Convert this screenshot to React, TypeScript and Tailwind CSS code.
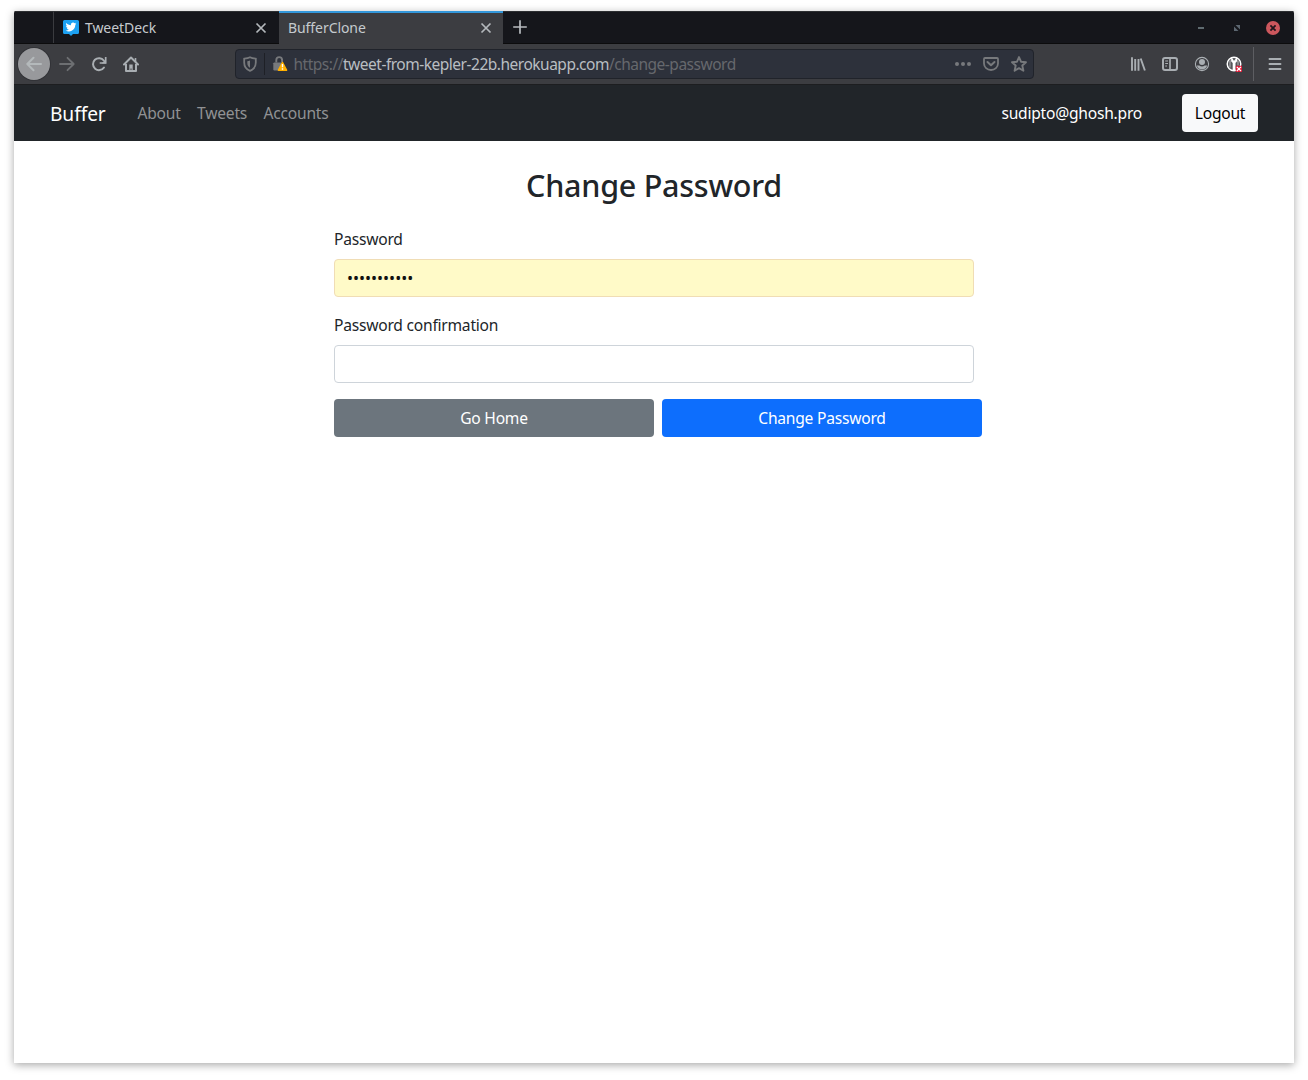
import React from "react";

function Icon({ children, className = "" }: { children: React.ReactNode; className?: string }) {
  return (
    <svg viewBox="0 0 16 16" fill="none" stroke="currentColor" strokeWidth="2" className={`size-4 shrink-0 ${className}`}>
      {children}
    </svg>
  );
}

function CloseX({ className }: { className: string }) {
  return (
    <Icon className={className}>
      <path d="M3.5 3.5l9 9M12.5 3.5l-9 9" strokeWidth="1.7" />
    </Icon>
  );
}

function TabBar() {
  return (
    <div className="flex h-[33px] border-b border-[#0c0c0d] bg-[#15161b] font-['Noto_Sans',sans-serif] text-[14px] tracking-[-0.07px] text-[#c5cace]">
      <div className="w-[39px] border-t border-[#2c2e31]" />
      <div className="flex w-[226px] items-center border-t border-l border-t-[#2c2e31] border-l-[#3a3b3f] pl-[9px] pr-[10px]">
        <svg viewBox="0 0 16 16" className="mr-[6px] size-4 shrink-0">
          <path d="M1.500 0h13A1.500 1.500 0 0 1 16 1.500v11a1.500 1.500 0 0 1-1.500 1.500H10L8 16l-2-2H1.500A1.500 1.500 0 0 1 0 12.500v-11A1.500 1.500 0 0 1 1.500 0z" fill="#1da1f2" />
          <path transform="translate(2.600 1.600) scale(.45)" fill="#fff" d="M23.950 4.570a10 10 0 0 1-2.820.770 4.960 4.960 0 0 0 2.160-2.720c-.95.550-2 .950-3.130 1.180a4.920 4.920 0 0 0-8.380 4.480C7.690 8.090 4.070 6.130 1.640 3.160a4.820 4.820 0 0 0-.670 2.480c0 1.710.87 3.210 2.190 4.100a4.900 4.900 0 0 1-2.230-.620v.060a4.920 4.920 0 0 0 3.950 4.830 5 5 0 0 1-2.210.080 4.940 4.940 0 0 0 4.600 3.420A9.870 9.870 0 0 1 0 19.540a13.990 13.990 0 0 0 7.560 2.210c9.050 0 14-7.500 14-13.980 0-.210 0-.420-.020-.630a9.940 9.940 0 0 0 2.460-2.550z" />
        </svg>
        <span className="grow">TweetDeck</span>
        <CloseX className="text-[#b4b8bc]" />
      </div>
      <div className="-mb-px flex w-[224px] items-center border-t-2 border-[#3498db] bg-[#3c3d41] pr-[9px] pb-px pl-[9px]">
        <span className="grow">BufferClone</span>
        <CloseX className="text-[#b4b8bc]" />
      </div>
      <div className="flex grow items-center border-t border-[#2c2e31] pl-[9px]">
        <svg viewBox="0 0 16 16" className="-mt-[2px] size-4 text-[#b8bcc0]" fill="none" stroke="currentColor">
          <path d="M8 1.200v13.600M1.200 8h13.600" strokeWidth="1.700" />
        </svg>
        <div className="grow" />
        <svg viewBox="0 0 90 16" className="mr-[10px] h-4 w-[90px]">
          <path d="M4 8h6" stroke="#5f6b70" strokeWidth="2" />
          <path d="M41.500 5H46v4.500zM40 6.500V11h4.500z" fill="#5c6670" />
          <circle cx="79" cy="8" r="7" fill="#cc575d" />
          <path d="M76.400 5.400l5.200 5.200M81.600 5.400l-5.200 5.200" stroke="#20161c" strokeWidth="1.800" />
        </svg>
      </div>
    </div>
  );
}

function UrlBar() {
  return (
    <div className="ml-[96px] flex h-[30px] w-[799px] shrink-0 items-center rounded-[4px] border border-[#20232a] bg-[#2d313b] pr-[6px] pl-[6px] text-[#77797c]">
      <Icon>
        <path d="M8 1.300C6 2.300 4 2.500 2.200 2.700v3.800C2.200 10.800 4.500 13.500 8 14.800c3.500-1.300 5.800-4 5.800-8.300V2.700C12 2.500 10 2.300 8 1.300z" strokeWidth="1.800" />
        <path d="M8 4.500c-1 .4-1.800.5-2.700.7v1.500c0 2.400.9 4.100 2.700 5.100z" fill="currentColor" stroke="none" />
      </Icon>
      <div className="mx-[6px] h-[22px] w-px bg-[#1e2026]" />
      <svg viewBox="0 0 18 18" className="mr-[3px] ml-px size-[18px] shrink-0">
        <path d="M4.300 7.500V5a2.900 2.900 0 0 1 5.800 0v2" fill="none" stroke="#77797c" strokeWidth="1.900" />
        <path d="M2 7.500h8.500l-4.500 8H2.500A1.200 1.200 0 0 1 1.300 14.300V8.200z" fill="#77797c" />
        <path d="M10.500 7.500l4 7.700H6.500z" fill="#ffb000" stroke="#ffb000" strokeWidth="1.600" strokeLinejoin="round" />
        <path d="M10.500 9v3.200M10.500 13.300v1.400" stroke="#fff" strokeWidth="1.400" />
      </svg>
      <div className="-mt-px ml-[0.5px] grow font-['Noto_Sans',sans-serif] text-[15.500px] tracking-[-0.490px] whitespace-nowrap text-[#66686d]">
        https://<span className="text-[#b9bec2]">tweet-from-kepler-22b.herokuapp.com</span>/change-password
      </div>
      <div className="flex gap-3">
        <Icon>
          <g fill="currentColor" stroke="none">
            <circle cx="2" cy="8" r="2" />
            <circle cx="8" cy="8" r="2" />
            <circle cx="14" cy="8" r="2" />
          </g>
        </Icon>
        <Icon>
          <path d="M2 2h12a1 1 0 0 1 1 1v4.500a7 6.500 0 0 1-14 0V3a1 1 0 0 1 1-1z" strokeWidth="1.800" />
          <path d="M4.500 6L8 9.300 11.500 6" strokeLinecap="round" strokeLinejoin="round" />
        </Icon>
        <Icon>
          <path d="M8 1.100l2 4.600 5 .5-3.700 3.300 1.100 5.200L8 12.100l-4.400 2.600 1.100-5.200L1 6.200l5-.5z" strokeWidth="1.900" strokeLinejoin="round" />
        </Icon>
      </div>
    </div>
  );
}

function Toolbar() {
  return (
    <div className="flex h-10 items-center bg-[#3c3d41] pl-1 text-[#a9aeb2]">
      <div className="flex size-8 shrink-0 items-center justify-center rounded-full bg-[#98999c] shadow-[0_0_0_1px_#323337]">
        <Icon className="text-[#b4b9bb]">
          <path d="M15 8H1.500M7.500 1.800L1.300 8l6.200 6.200" strokeLinecap="round" strokeLinejoin="round" />
        </Icon>
      </div>
      <Icon className="ml-[9px] text-[#6d6f72]">
        <path d="M1 8h13.500M8.500 1.800L14.700 8l-6.200 6.200" strokeWidth="1.800" strokeLinecap="round" strokeLinejoin="round" />
      </Icon>
      <Icon className="ml-4">
        <path d="M13 11.500A6 6 0 1 1 12.800 4.500" strokeLinecap="round" />
        <path d="M14.700 1v6H8.700" strokeWidth="1.700" />
        <path d="M15 3v4.500h-4.500z" fill="currentColor" stroke="none" />
      </Icon>
      <Icon className="ml-4">
        <path d="M1 8.500L8 1.500l7 7" strokeLinecap="round" strokeLinejoin="round" />
        <path d="M3 8v7h10V8" strokeLinejoin="round" />
        <path d="M6.300 14.500V8.500h3.400v6H8.500v-2h-1v2z" fill="currentColor" stroke="none" />
        <path d="M12.500 2v4" strokeWidth="1.600" />
      </Icon>
      <UrlBar />
      <Icon className="ml-24">
        <path d="M2 1.200v13.600M5.200 3v11.800M8.500 3v11.800M10.700 2.500l4.200 12" strokeWidth="1.900" />
      </Icon>
      <Icon className="ml-4">
        <rect x="1" y="2" width="14" height="12" rx="2" />
        <path d="M8 2v12" strokeWidth="1.700" />
        <path d="M3.200 5H6M3.200 7.500H6M3.200 10H5" strokeWidth="1.200" />
      </Icon>
      <Icon className="ml-4">
        <circle cx="8" cy="8" r="6.600" strokeWidth="1.100" />
        <circle cx="8" cy="6" r="3" fill="currentColor" stroke="none" />
        <path d="M2.800 9.500h2.500c1.500 1.200 3.900 1.200 5.400 0h2.500c-.8 2.500-2.800 3.900-5.200 3.900S3.600 12 2.800 9.500z" fill="currentColor" stroke="none" />
      </Icon>
      <svg viewBox="0 0 16 16" className="ml-4 size-4 shrink-0">
        <circle cx="8" cy="8" r="6.800" fill="#55565a" stroke="#fff" strokeWidth="1.400" />
        <path d="M4 4.500v7M12 4.500v5" stroke="#98999c" strokeWidth="1.500" />
        <path d="M5.200 1.800v3.500l1.700 1.700V14h2.400V7L11 5.300V1.800L9.200 3.300v1.300H7V3.300z" fill="#fff" stroke="#fff" strokeWidth=".4" />
        <rect x="9.800" y="9.800" width="6.200" height="6.200" fill="#dc1835" />
        <path d="M10.800 10.800l4.200 4.200M15 10.800l-4.200 4.200" stroke="#fff" strokeWidth="1.200" />
      </svg>
      <div className="ml-[11px] h-[34px] w-px bg-[#5d5e62]" />
      <Icon className="ml-[13px]">
        <path d="M2.500 3h11M2.500 8h11M2.500 13h11" strokeLinecap="round" strokeWidth="1.900" />
      </Icon>
    </div>
  );
}

function SiteNav() {
  return (
    <nav className="flex h-[57px] items-center border-t border-[#1d1e20] bg-[#212529] pr-9 pl-9">
      <span className="w-[87.500px] pt-px text-[19.200px] tracking-[-0.1px] text-white">Buffer</span>
      <div className="flex gap-[16.5px] text-[#909294]">
        <span>About</span>
        <span>Tweets</span>
        <span>Accounts</span>
      </div>
      <span className="ml-auto text-white">sudipto@ghosh.pro</span>
      <button className="ml-10 h-[38px] w-[76px] rounded-[4px] bg-[#f8f9fa] text-black">Logout</button>
    </nav>
  );
}

export default function App() {
  return (
    <div className="h-[1080px] w-[1308px] overflow-hidden bg-white px-[14px] pt-[11px] font-['Noto_Sans',sans-serif] text-[15.600px] leading-6 tracking-[-0.23px] text-[#212529]">
      <div className="h-[1052px] rounded-t-[2px] bg-white shadow-[0_2px_9px_rgba(0,0,0,0.35)]">
        <div className="overflow-hidden rounded-t-[2px]">
          <TabBar />
          <Toolbar />
          <SiteNav />
        </div>
        <main className="mx-auto w-[640px] pt-[25px]">
          <h1 className="text-center text-[30.500px] leading-[38px] font-medium tracking-[-0.250px]">Change Password</h1>
          <label className="mt-[23px] block h-6">Password</label>
          <input type="password" readOnly defaultValue="aaaaaaaaaaa" className="mt-2 block h-[38px] w-full rounded-[4px] border border-[#f0ddb5] bg-[#fffac8] px-3 text-[16px] tracking-normal text-[#111]" />
          <label className="mt-[16px] block h-6">Password confirmation</label>
          <input type="password" className="mt-2 block h-[38px] w-full rounded-[4px] border border-[#ced4da] px-3" />
          <div className="mt-4 flex w-[648px] gap-2 text-white">
            <button className="h-[38px] flex-1 rounded-[4px] bg-[#6c757d]">Go Home</button>
            <button className="h-[38px] flex-1 rounded-[4px] bg-[#0d6efd]">Change Password</button>
          </div>
        </main>
      </div>
    </div>
  );
}
